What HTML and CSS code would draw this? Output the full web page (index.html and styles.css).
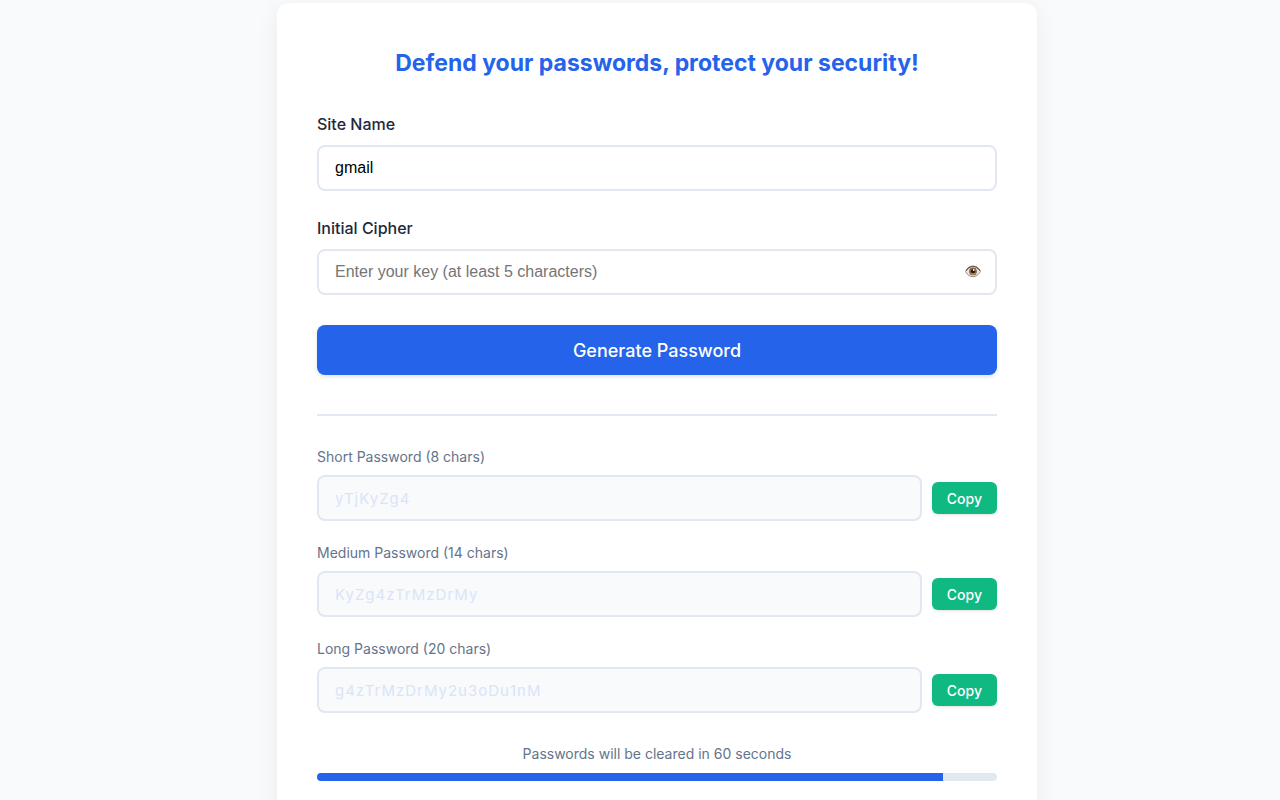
FILE: index.html
```html
<!DOCTYPE html>
<html lang="en">
<head>
<meta charset="utf-8">
<meta name="viewport" content="width=device-width, initial-scale=1">
<title>Password Generator</title>
<link rel="stylesheet" href="styles.css">
</head>
<body>
<main class="card">
  <h1 class="title">Defend your passwords, protect your security!</h1>
  <form class="form">
    <div class="field">
      <label class="label" for="site">Site Name</label>
      <input class="input" id="site" type="text" value="gmail">
    </div>
    <div class="field">
      <label class="label" for="cipher">Initial Cipher</label>
      <div class="input-wrap">
        <input class="input" id="cipher" type="password" placeholder="Enter your key (at least 5 characters)">
        <button class="eye" type="button" aria-label="Show cipher">
          <svg viewBox="0 0 16 14" width="16" height="14" aria-hidden="true">
            <path d="M0.5 6.500C2.600 2.700 5.200 1 8 1s5.400 1.700 7.500 5.300C13.400 9.900 11 11.700 8 11.700S2.600 10.200 0.500 6.500z" fill="#eee9e6" stroke="#8c817b" stroke-width="0.900"/>
            <circle cx="8" cy="6.400" r="3.900" fill="#8b6038"/>
            <path d="M5 8.200a3.700 3.700 0 0 0 6 0z" fill="#c09048"/>
            <circle cx="8" cy="6.200" r="2" fill="#201810"/>
            <circle cx="8.700" cy="5" r="0.900" fill="#fff"/>
            <path d="M1 5.700C3.200 2.500 5.400 1.500 8 1.500s4.800 1 7 4.200" fill="none" stroke="#5f534e" stroke-width="1.200"/>
          </svg>
        </button>
      </div>
    </div>
    <button class="generate" type="submit">Generate Password</button>
  </form>
  <section class="results">
    <div class="result">
      <label class="result-label" for="short">Short Password (8 chars)</label>
      <div class="result-row"><input class="input output" id="short" type="text" value="yTjKyZg4" readonly><button class="copy" type="button">Copy</button></div>
    </div>
    <div class="result">
      <label class="result-label" for="medium">Medium Password (14 chars)</label>
      <div class="result-row"><input class="input output" id="medium" type="text" value="KyZg4zTrMzDrMy" readonly><button class="copy" type="button">Copy</button></div>
    </div>
    <div class="result">
      <label class="result-label" for="long">Long Password (20 chars)</label>
      <div class="result-row"><input class="input output" id="long" type="text" value="g4zTrMzDrMy2u3oDu1nM" readonly><button class="copy" type="button">Copy</button></div>
    </div>
    <p class="timer">Passwords will be cleared in 60 seconds</p>
    <div class="track"><div class="bar" style="width: 92%"></div></div>
  </section>
</main>
</body>
</html>
```
FILE: styles.css
```css
* { box-sizing: border-box; }
html { overflow-x: hidden; scrollbar-width: none; }
body {
  margin: 0;
  padding: 3px 20px 40px 54px;
  background: #f8fafc;
  color: #1e293b;
  font-family: Inter, "Liberation Sans", sans-serif;
  font-size: 16px;
  line-height: 24px;
}
.card {
  max-width: 760px;
  margin: 0 auto;
  padding: 40px;
  background: #fff;
  border-radius: 12px;
  box-shadow: 0 4px 24px rgba(15, 23, 42, 0.06);
}
.title {
  margin: 0 0 29px;
  color: #2563eb;
  font-size: 23px;
  line-height: 40px;
  font-weight: 700;
  text-align: center;
}
.field { margin-bottom: 25px; }
.label {
  display: block;
  margin-bottom: 8px;
  font-weight: 500;
  line-height: 25px;
}
.input {
  display: block;
  width: 100%;
  height: 46px;
  padding: 0 16px;
  border: 2px solid #e2e8f0;
  border-radius: 8px;
  background: #fff;
  color: #000;
  font-family: "Liberation Sans", Arial, sans-serif;
  font-size: 16px;
}
.input::placeholder { color: #757575; opacity: 1; }
.input-wrap { position: relative; }
.eye {
  position: absolute;
  top: 0;
  right: 16px;
  display: flex;
  align-items: center;
  height: 100%;
  padding: 0;
  border: 0;
  background: none;
}
.generate {
  width: 100%;
  height: 50px;
  margin-top: 5px;
  border: 0;
  border-radius: 8px;
  background: #2563eb;
  color: #fff;
  font-family: inherit;
  font-size: 18px;
  font-weight: 500;
  box-shadow: 0 2px 4px rgba(15, 23, 42, 0.12);
}
.results {
  margin-top: 39px;
  padding-top: 29px;
  border-top: 2px solid #e2e8f0;
}
.result { margin-bottom: 20px; }
.result-label {
  display: block;
  margin-bottom: 6px;
  color: #64748b;
  font-size: 14px;
}
.result-row {
  display: flex;
  align-items: center;
  gap: 10px;
}
.output {
  flex: 1;
  min-width: 0;
  background: #f8fafc;
  color: #dbe4f8;
  font-family: inherit;
  font-size: 15px;
  letter-spacing: 1px;
}
.copy {
  height: 32px;
  padding: 0 15px;
  border: 0;
  border-radius: 6px;
  background: #10b981;
  color: #fff;
  font-family: inherit;
  font-size: 14px;
  font-weight: 500;
  box-shadow: 0 1px 3px rgba(15, 23, 42, 0.12);
}
.timer {
  margin: 29px 0 7px;
  color: #64748b;
  font-size: 14px;
  text-align: center;
}
.track {
  height: 8px;
  overflow: hidden;
  border-radius: 4px;
  background: #e2e8f0;
}
.bar { height: 100%; background: #2563eb; }
```
